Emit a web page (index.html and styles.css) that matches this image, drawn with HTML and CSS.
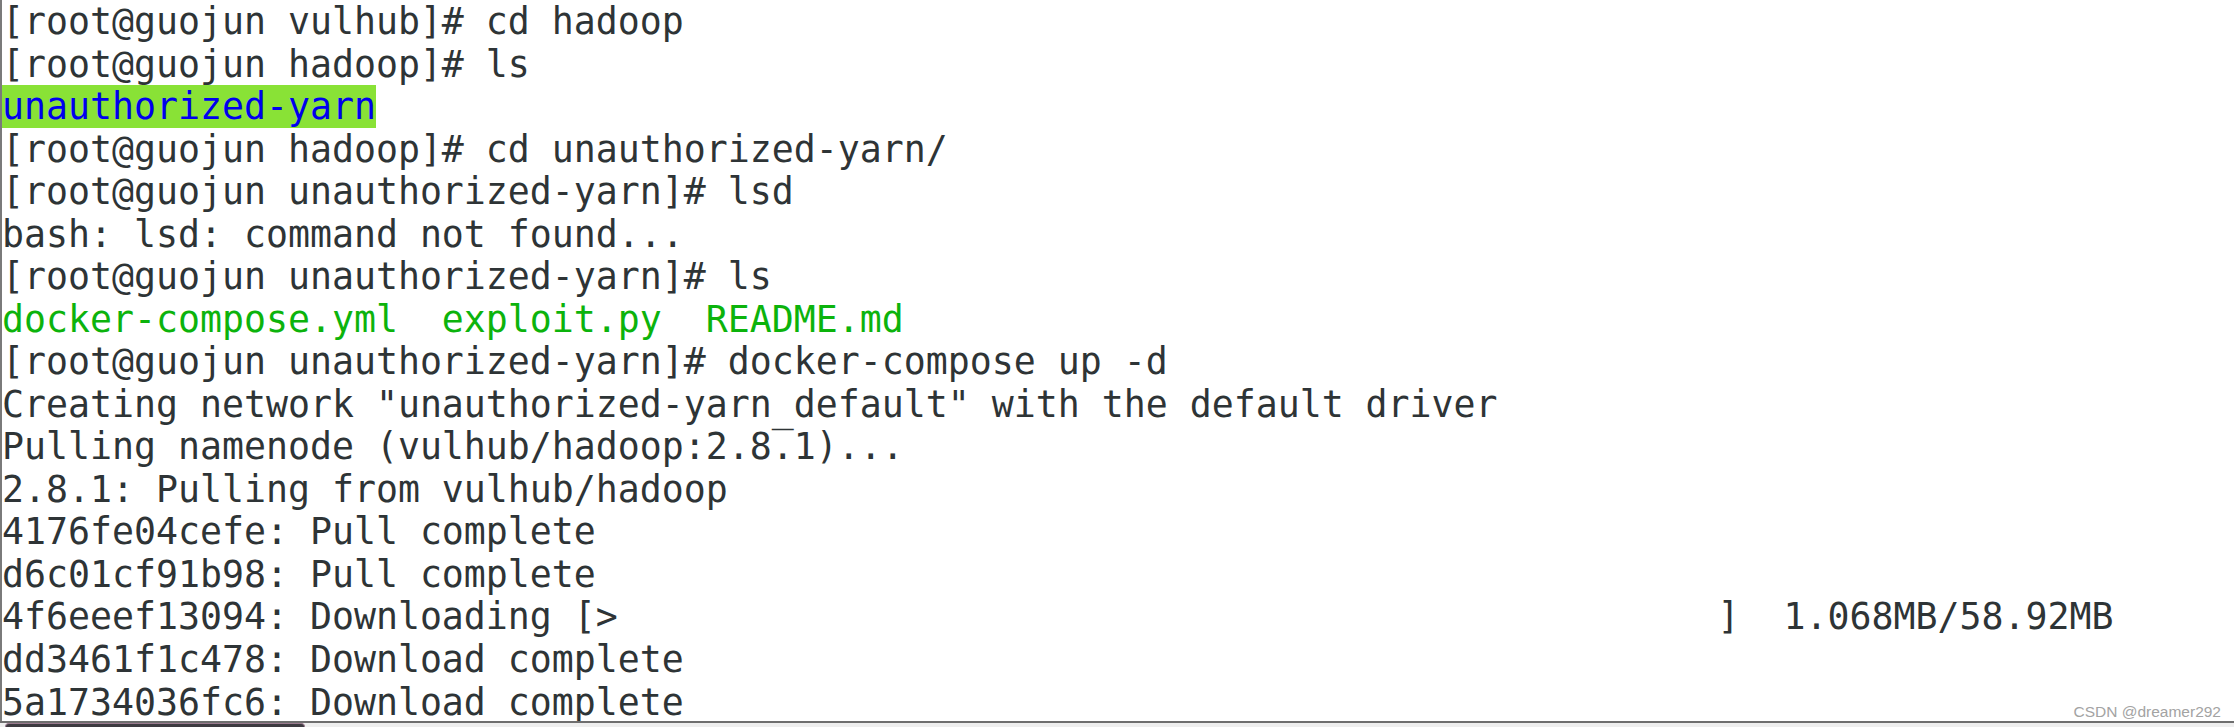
FILE: index.html
```html
<!DOCTYPE html>
<html lang="en">
<head>
<meta charset="utf-8">
<title>Terminal</title>
<link rel="stylesheet" href="styles.css">
</head>
<body>
<div class="screen">
  <div class="term">
    <div class="lines">
      <div class="line">[root@guojun vulhub]# cd hadoop</div>
      <div class="line">[root@guojun hadoop]# ls</div>
      <div class="line"><span class="dir-ow">unauthorized-yarn</span></div>
      <div class="line">[root@guojun hadoop]# cd unauthorized-yarn/</div>
      <div class="line">[root@guojun unauthorized-yarn]# lsd</div>
      <div class="line">bash: lsd: command not found...</div>
      <div class="line">[root@guojun unauthorized-yarn]# ls</div>
      <div class="line files">docker-compose.yml  exploit.py  README.md</div>
      <div class="line">[root@guojun unauthorized-yarn]# docker-compose up -d</div>
      <div class="line">Creating network "unauthorized-yarn<span class="us">_</span>default" with the default driver</div>
      <div class="line">Pulling namenode (vulhub/hadoop:2.8.1)...</div>
      <div class="line">2.8.1: Pulling from vulhub/hadoop</div>
      <div class="line">4176fe04cefe: Pull complete</div>
      <div class="line">d6c01cf91b98: Pull complete</div>
      <div class="line">4f6eeef13094: Downloading [&gt;                                                  ]  1.068MB/58.92MB</div>
      <div class="line">dd3461f1c478: Download complete</div>
      <div class="line">5a1734036fc6: Download complete</div>
    </div>
    <div class="watermark">CSDN @dreamer292</div>
  </div>
  <div class="bar">
    <div class="task"></div>
  </div>
</div>
</body>
</html>
```

FILE: styles.css
```css
html, body {
  margin: 0;
  padding: 0;
  background: #ffffff;
}

body {
  width: 2234px;
  height: 727px;
  overflow: hidden;
}

.screen {
  display: flex;
  flex-direction: column;
  width: 2234px;
  height: 727px;
}

.term {
  position: relative;
  height: 721px;
  flex: none;
  border-left: 2px solid #7a7a7a;
  overflow: hidden;
  background: #ffffff;
}

.lines {
  margin-top: 1px;
  font-family: "DejaVu Sans Mono", monospace;
  font-size: 36.54px;
  line-height: 42.54px;
  color: #2e3436;
}

.line {
  white-space: pre;
  height: 42.54px;
}

.dir-ow {
  color: #0000ee;
  background: #89e236;
}

.files {
  color: #0cb30c;
}

.us {
  position: relative;
  top: 4px;
}

.watermark {
  position: absolute;
  right: 13px;
  bottom: 0px;
  font-family: "Liberation Sans", Arial, sans-serif;
  font-size: 15.5px;
  line-height: 18px;
  color: #a3a3a3;
}

.bar {
  flex: 1;
  border-top: 2px solid #6e6e6e;
  background: #eeeeee;
  display: flex;
  align-items: flex-end;
  padding-left: 5px;
}

.task {
  width: 298px;
  height: 3px;
  background: #3d3a40;
  border: 1px solid #9a7a8e;
  border-bottom: none;
  border-radius: 6px 6px 0 0;
}
```
